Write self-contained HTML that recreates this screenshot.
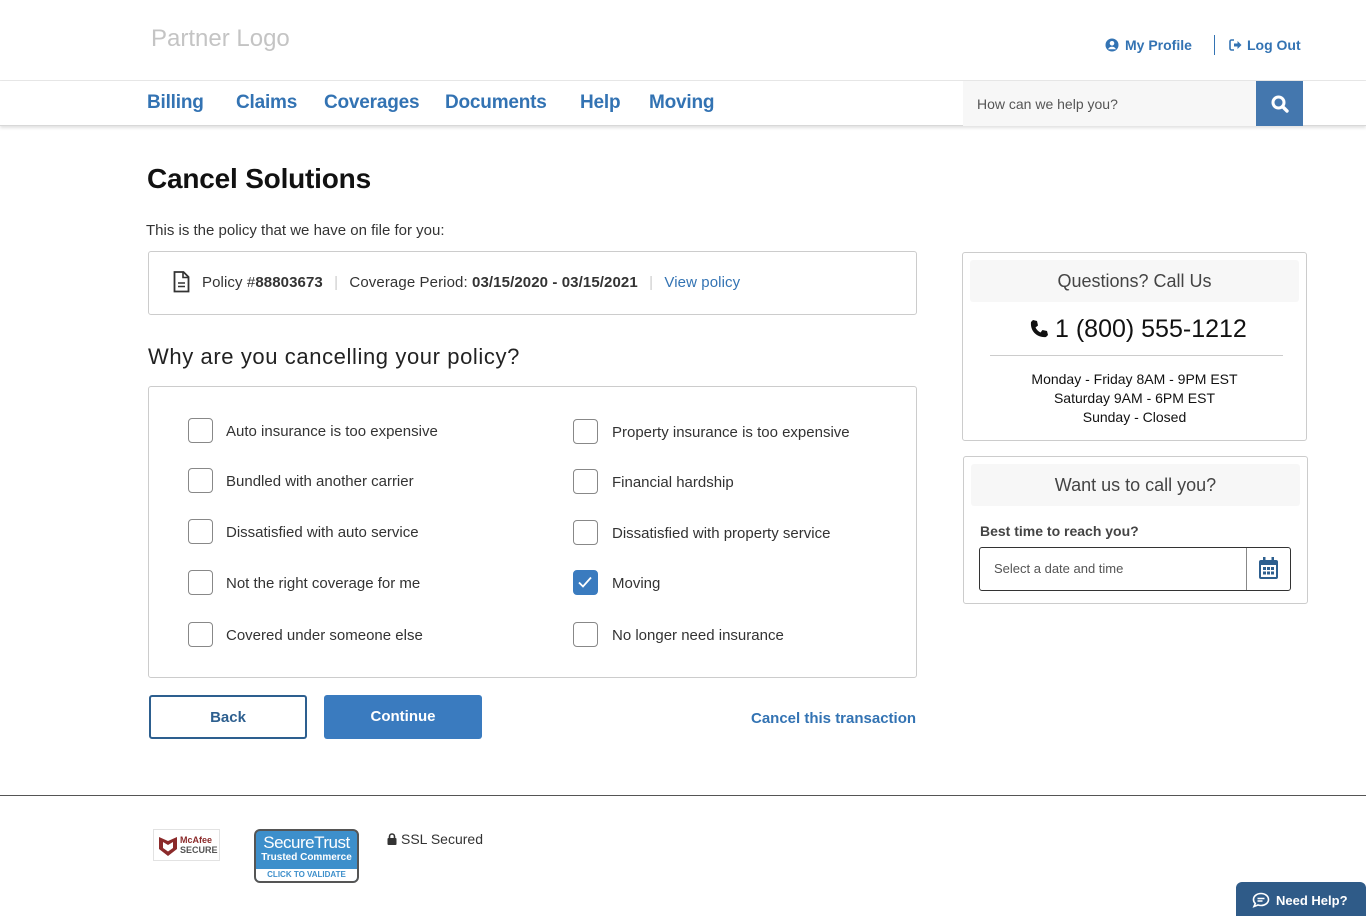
<!DOCTYPE html>
<html><head><meta charset="utf-8"><style>
*{box-sizing:border-box;margin:0;padding:0}
body{width:1366px;height:916px;position:relative;font-family:"Liberation Sans",sans-serif;color:#222;background:#fff;overflow:hidden}
.a{position:absolute}
.blue{color:#3373b3}
.nav a{position:absolute;top:92px;font-size:19px;font-weight:bold;color:#3373b3;text-decoration:none;letter-spacing:-.2px}
.cb{position:absolute;width:25px;height:25px;border:1.5px solid #888;border-radius:4px;background:#fff}
.lbl{position:absolute;font-size:15px;color:#333}
.card{position:absolute;border:1px solid #ccc;border-radius:3px;background:#fff}
.band{position:absolute;background:#f7f7f7;border-radius:3px;text-align:center;font-size:18px;color:#444}
</style></head><body>
<div class="a" style="left:151px;top:25px;font-size:24px;color:#c4c4c4">Partner Logo</div>
<div class="a" style="left:1105px;top:37px;font-size:14px;font-weight:bold;color:#3373b3">
<svg width="14" height="14" viewBox="0 0 14 14" style="vertical-align:-2px;margin-right:6px"><circle cx="7" cy="7" r="6.5" fill="#3373b3"/><circle cx="7" cy="5.3" r="2.3" fill="#fff"/><path d="M3 11.3c1-2 2.4-2.6 4-2.6s3 .6 4 2.6" fill="#fff"/></svg>My Profile</div>
<div class="a" style="left:1214px;top:35px;width:1px;height:20px;background:#3373b3"></div>
<div class="a" style="left:1229px;top:37px;font-size:14px;font-weight:bold;color:#3373b3">
<svg width="13" height="12" viewBox="0 0 13 12" style="vertical-align:-1px;margin-right:5px"><path d="M5 1H2.5a1.5 1.5 0 0 0-1.5 1.5v7A1.5 1.5 0 0 0 2.5 11H5" stroke="#3373b3" stroke-width="1.6" fill="none"/><path d="M5 4.5h3.5V2L12.5 6 8.5 10V7.5H5z" fill="#3373b3"/></svg>Log Out</div>
<div class="a" style="left:0;top:80px;width:1366px;height:1px;background:#e8e8e8"></div>
<div class="a" style="left:0;top:81px;width:1366px;height:45px;border-bottom:1px solid #d8d8d8;box-shadow:0 2px 3px rgba(0,0,0,.12)"></div>
<div class="nav"><a style="left:147px">Billing</a><a style="left:236px">Claims</a><a style="left:324px">Coverages</a><a style="left:445px">Documents</a><a style="left:580px">Help</a><a style="left:649px">Moving</a></div>
<div class="a" style="left:963px;top:81px;width:293px;height:45px;background:#f7f7f7;font-size:14px;color:#555;padding:15px 0 0 14px">How can we help you?</div>
<div class="a" style="left:1256px;top:81px;width:47px;height:45px;background:#4477ae">
<svg width="20" height="20" viewBox="0 0 20 20" style="position:absolute;left:14px;top:13px"><circle cx="8.5" cy="8.5" r="5.5" stroke="#fff" stroke-width="3" fill="none"/><path d="M12.5 12.5l4.5 4.5" stroke="#fff" stroke-width="3.4" stroke-linecap="round"/></svg></div>

<div class="a" style="left:147px;top:163px;font-size:28px;font-weight:bold;color:#111;letter-spacing:-.2px">Cancel Solutions</div>
<div class="a" style="left:146px;top:222px;font-size:15px;color:#333">This is the policy that we have on file for you:</div>
<div class="card" style="left:148px;top:251px;width:769px;height:64px"></div>
<svg class="a" style="left:173px;top:271px" width="17" height="22" viewBox="0 0 17 22"><path d="M1.5 1h9l5 5v14.5h-14z" fill="none" stroke="#333" stroke-width="1.8"/><path d="M10 1v5.5h5.5" fill="none" stroke="#333" stroke-width="1.6"/><path d="M5 12h7M5 15.5h7" stroke="#333" stroke-width="1.6"/></svg>
<div class="a" style="left:202px;top:274px;font-size:15px;color:#333;white-space:nowrap;letter-spacing:.1px">Policy #<b>88803673</b> <span style="color:#ccc;margin:0 7px">|</span> Coverage Period: <b>03/15/2020 - 03/15/2021</b> <span style="color:#ccc;margin:0 7px">|</span> <span class="blue">View policy</span></div>
<div class="a" style="left:148px;top:344px;font-size:22px;color:#222;letter-spacing:.6px">Why are you cancelling your policy?</div>
<div class="card" style="left:148px;top:386px;width:769px;height:292px"></div>
<div class="cb" style="left:188px;top:418px"></div><div class="lbl" style="left:226px;top:423px">Auto insurance is too expensive</div>
<div class="cb" style="left:188px;top:468px"></div><div class="lbl" style="left:226px;top:473px">Bundled with another carrier</div>
<div class="cb" style="left:188px;top:519px"></div><div class="lbl" style="left:226px;top:524px">Dissatisfied with auto service</div>
<div class="cb" style="left:188px;top:570px"></div><div class="lbl" style="left:226px;top:575px">Not the right coverage for me</div>
<div class="cb" style="left:188px;top:622px"></div><div class="lbl" style="left:226px;top:627px">Covered under someone else</div>
<div class="cb" style="left:573px;top:419px"></div><div class="lbl" style="left:612px;top:424px">Property insurance is too expensive</div>
<div class="cb" style="left:573px;top:469px"></div><div class="lbl" style="left:612px;top:474px">Financial hardship</div>
<div class="cb" style="left:573px;top:520px"></div><div class="lbl" style="left:612px;top:525px">Dissatisfied with property service</div>
<div class="cb" style="left:573px;top:570px;background:#3a7bbf;border-color:#3a7bbf"><svg width="22" height="22" viewBox="0 0 22 22"><path d="M5 11.5l4 4 8-9" stroke="#fff" stroke-width="1.8" fill="none"/></svg></div><div class="lbl" style="left:612px;top:575px">Moving</div>
<div class="cb" style="left:573px;top:622px"></div><div class="lbl" style="left:612px;top:627px">No longer need insurance</div>

<div class="a" style="left:149px;top:695px;width:158px;height:44px;border:2px solid #2d5f8f;border-radius:3px;text-align:center;line-height:42px;font-size:15px;font-weight:bold;color:#2d5f8f">Back</div>
<div class="a" style="left:324px;top:695px;width:158px;height:44px;background:#3a7bbf;border-radius:3px;text-align:center;line-height:44px;font-size:15px;font-weight:bold;color:#fff">Continue</div>
<div class="a blue" style="left:751px;top:710px;font-size:15px;font-weight:bold">Cancel this transaction</div>

<div class="card" style="left:962px;top:252px;width:345px;height:189px"></div>
<div class="band" style="left:970px;top:260px;width:329px;height:42px;line-height:42px">Questions? Call Us</div>
<div class="a" style="left:1029px;top:315px;font-size:25px;color:#111"><svg width="20" height="20" viewBox="0 0 20 20" style="vertical-align:-2px;margin-right:6px"><path d="M4 1l4 1 1 4.5-2.5 2a11 11 0 0 0 5 5l2-2.5 4.5 1 1 4-2 2C8 19 1 12 2 3z" fill="#111"/></svg>1 (800) 555-1212</div>
<div class="a" style="left:990px;top:355px;width:293px;height:1px;background:#ccc"></div>
<div class="a" style="left:962px;top:370px;width:345px;text-align:center;font-size:14px;line-height:19px;color:#111">Monday - Friday 8AM - 9PM EST<br>Saturday 9AM - 6PM EST<br>Sunday - Closed</div>
<div class="card" style="left:963px;top:456px;width:345px;height:148px"></div>
<div class="band" style="left:971px;top:464px;width:329px;height:42px;line-height:42px">Want us to call you?</div>
<div class="a" style="left:980px;top:523px;font-size:14px;font-weight:bold;color:#444">Best time to reach you?</div>
<div class="a" style="left:979px;top:547px;width:312px;height:44px;border:1px solid #333;border-radius:3px;font-size:13px;color:#555;padding:13px 0 0 14px">Select a date and time</div>
<div class="a" style="left:1246px;top:548px;width:1px;height:42px;background:#888"></div>
<svg class="a" style="left:1258px;top:556px" width="21" height="24" viewBox="0 0 21 24"><rect x="1" y="4" width="19" height="19" rx="2" fill="#2d5f8f"/><rect x="3" y="9" width="15" height="12" fill="#fff"/><rect x="5" y="1" width="2.5" height="5" fill="#2d5f8f"/><rect x="13.5" y="1" width="2.5" height="5" fill="#2d5f8f"/><g fill="#2d5f8f"><rect x="5" y="11" width="3" height="3"/><rect x="9" y="11" width="3" height="3"/><rect x="13" y="11" width="3" height="3"/><rect x="5" y="15.5" width="3" height="3"/><rect x="9" y="15.5" width="3" height="3"/><rect x="13" y="15.5" width="3" height="3"/></g></svg>

<div class="a" style="left:0;top:795px;width:1366px;height:1px;background:#555"></div>
<div class="a" style="left:153px;top:829px;width:67px;height:32px;border:1px solid #e2e2e2">
<svg width="20" height="22" viewBox="0 0 20 22" style="position:absolute;left:4px;top:5px"><path d="M1 2l9 4 9-4v12l-9 7-9-7z" fill="#8b2a2a"/><path d="M5 7l5 3 5-3v6l-5 3.5L5 13z" fill="#fff"/></svg>
<div style="position:absolute;left:26px;top:5px;font-size:9px;font-weight:bold;line-height:10px;color:#8b2a2a">McAfee<br><span style="color:#555">SECURE</span></div></div>
<div class="a" style="left:254px;top:829px;width:105px;height:54px;border:2px solid #555;border-radius:6px;background:#3d8fcb;overflow:hidden;text-align:center;color:#fff">
<div style="font-size:17px;line-height:18px;margin-top:3px;letter-spacing:-.5px">SecureTrust</div>
<div style="font-size:10px;font-weight:bold;line-height:12px">Trusted Commerce</div>
<div style="position:absolute;left:0;bottom:0;width:101px;height:12px;background:#fff;color:#3d8fcb;font-size:8px;font-weight:bold;line-height:12px">CLICK TO VALIDATE</div></div>
<div class="a" style="left:387px;top:831px;font-size:14px;color:#333"><svg width="10" height="12" viewBox="0 0 10 12" style="vertical-align:-1px;margin-right:4px"><rect x="0.5" y="5" width="9" height="7" rx="1" fill="#333"/><path d="M2.5 5.5V3.5a2.5 2.5 0 0 1 5 0v2" stroke="#333" stroke-width="1.6" fill="none"/></svg>SSL Secured</div>
<div class="a" style="left:1236px;top:882px;width:130px;height:34px;background:#2f5b88;border-radius:6px 6px 0 0;color:#fff;font-size:13px;font-weight:bold;padding:10px 0 0 16px"><svg width="18" height="16" viewBox="0 0 18 16" style="vertical-align:-3px;margin-right:6px"><path d="M9 1.5c4 0 7.5 2.5 7.5 6s-3.5 6-7.5 6c-1 0-2-.2-3-.5L2 14.5l1.3-3C2 10.3 1.5 9 1.5 7.5c0-3.5 3.5-6 7.5-6z" stroke="#fff" stroke-width="1.6" fill="none"/><path d="M5.5 6.5h7M5.5 9h5" stroke="#fff" stroke-width="1.4"/></svg>Need Help?</div>
</body></html>
